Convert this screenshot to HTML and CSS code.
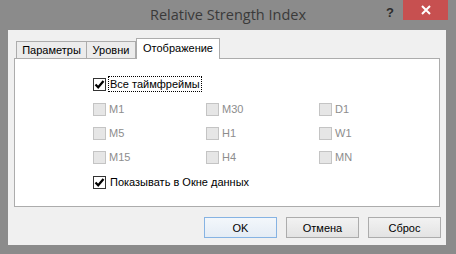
FILE: index.html
```
<!DOCTYPE html>
<html lang="ru">
<head>
    <meta charset="UTF-8">
    <meta name="viewport" content="width=device-width, initial-scale=1.0">
    <title>Relative Strength Index</title>
    <link rel="stylesheet" href="styles.css">
</head>
<body>
<div class="window">
    <div class="titlebar">
        <div></div>
        <div class="title">Relative Strength Index</div>
        <div class="controls">
            <span class="help">?</span>
            <span class="close">
                <svg width="10" height="10" viewBox="0 0 10 10"><path d="M1 1 L9 9 M9 1 L1 9" stroke="#fff" stroke-width="2"/></svg>
            </span>
        </div>
    </div>

    <div class="client">
        <div class="tabs">
            <div class="tab tab-params">Параметры</div>
            <div class="tab tab-levels">Уровни</div>
            <div class="tab active">Отображение</div>
        </div>

        <div class="panel">
            <div class="check all">
                <span class="box on"><svg width="11" height="11" viewBox="0 0 11 11"><path d="M1.5 5.5 L4.2 8.3 L9.5 2" stroke="#000" stroke-width="2.2" fill="none"/></svg></span>
                <span class="focus">Все таймфреймы</span>
            </div>

            <div class="periods">
                <div class="check off"><span class="box"></span>M1</div>
                <div class="check off"><span class="box"></span>M30</div>
                <div class="check off"><span class="box"></span>D1</div>
                <div class="check off"><span class="box"></span>M5</div>
                <div class="check off"><span class="box"></span>H1</div>
                <div class="check off"><span class="box"></span>W1</div>
                <div class="check off"><span class="box"></span>M15</div>
                <div class="check off"><span class="box"></span>H4</div>
                <div class="check off"><span class="box"></span>MN</div>
            </div>

            <div class="check">
                <span class="box on"><svg width="11" height="11" viewBox="0 0 11 11"><path d="M1.5 5.5 L4.2 8.3 L9.5 2" stroke="#000" stroke-width="2.2" fill="none"/></svg></span>
                <span class="label">Показывать в Окне данных</span>
            </div>
        </div>

        <div class="buttons">
            <button class="btn default">OK</button>
            <button class="btn">Отмена</button>
            <button class="btn">Сброс</button>
        </div>
    </div>
</div>
</body>
</html>
```

FILE: styles.css
```
body{
    margin: 0;
    font-family: "Liberation Sans", Arial, sans-serif;
    font-size: 11px;
    color: #000;
}

.window{
    width: 456px;
    height: 254px;
    box-sizing: border-box;
    background-color: #8b8b8b;
    padding: 0 10px 9px 8px;
}

/* title bar */
.titlebar{
    height: 30px;
    margin: 0 -10px 0 -8px;
    display: grid;
    grid-template-columns: 1fr auto 1fr;
}
.title{
    font-family: "Open Sans", "Liberation Sans", sans-serif;
    font-size: 14.5px;
    color: #3a3a3a;
    line-height: 30px;
}
.controls{
    display: flex;
    justify-content: flex-end;
    align-items: flex-start;
    padding-right: 8px;
}
.help{
    font-weight: bold;
    font-size: 13px;
    color: #2c2c2c;
    margin-top: 5px;
    margin-right: 9px;
}
.close{
    width: 45px;
    height: 20px;
    background-color: #c75050;
    display: flex;
    justify-content: center;
    align-items: center;
}

/* dialog body */
.client{
    height: 215px;
    box-sizing: border-box;
    background-color: #f0f0f0;
    padding: 8px 5px 7px 6px;
}

.tabs{
    display: flex;
    align-items: flex-end;
    height: 20px;
    padding-left: 2px;
}
.tab{
    height: 17px;
    box-sizing: border-box;
    border: 1px solid #acacac;
    border-bottom: none;
    background-color: #ececec;
    text-align: center;
    line-height: 16px;
    color: #000;
}
.tab-params{
    width: 71px;
}
.tab-levels{
    width: 49px;
    border-left: none;
}
.tab.active{
    width: 84px;
    height: 21px;
    margin-bottom: -1px;
    background-color: #fff;
    line-height: 18px;
    position: relative;
    z-index: 1;
}

.panel{
    height: 149px;
    box-sizing: border-box;
    border: 1px solid #acacac;
    background-color: #fff;
    margin-right: 1px;
    padding: 17px 0 0 78px;
}

.check{
    display: flex;
    align-items: center;
    height: 16px;
    white-space: nowrap;
}
.box{
    width: 13px;
    height: 13px;
    box-sizing: border-box;
    border: 1px solid #333;
    background-color: #fff;
    margin-right: 3px;
    display: flex;
    justify-content: center;
    align-items: center;
}
.focus{
    outline: 1px dotted #000;
    padding: 0 1px;
    line-height: 14px;
}
.label{
    padding-left: 1px;
}

.periods{
    display: grid;
    grid-template-columns: 113px 113px 113px;
    row-gap: 8px;
    margin: 9px 0;
}
.check.off{
    color: #8d8d8d;
}
.check.off .box{
    border-color: #c4c4c4;
    background-color: #e6e6e6;
}

.buttons{
    display: flex;
    justify-content: flex-end;
    gap: 9px;
    margin-top: 10px;
}
.btn{
    width: 73px;
    height: 21px;
    border: 1px solid #acacac;
    background: linear-gradient(#f2f2f2, #e3e3e3);
    font-family: "Liberation Sans", Arial, sans-serif;
    font-size: 11px;
    color: #000;
    padding: 0;
    margin: 0;
}
.btn.default{
    border-color: #86b3e3;
    background: linear-gradient(#f3f7fb, #e4ecf5);
}
```
